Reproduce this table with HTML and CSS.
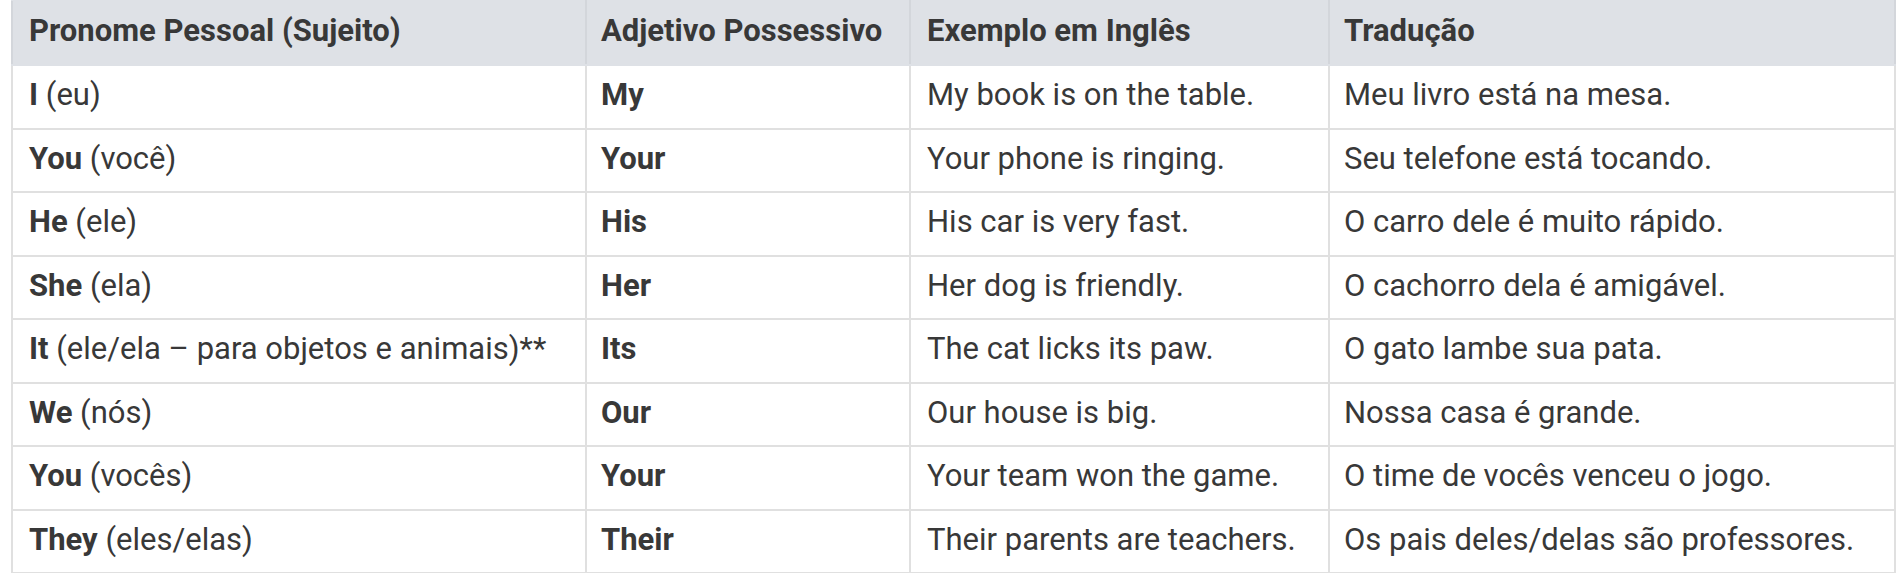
FILE: index.html
```html
<!DOCTYPE html>
<html lang="pt">
<head>
<meta charset="utf-8">
<title>Pronomes</title>
<link rel="stylesheet" href="styles.css">
</head>
<body>
<div class="wrap">
<table class="grid">
<colgroup>
<col class="c1"><col class="c2"><col class="c3"><col class="c4">
</colgroup>
<thead>
<tr><th>Pronome Pessoal (Sujeito)</th><th>Adjetivo Possessivo</th><th>Exemplo em Inglês</th><th>Tradução</th></tr>
</thead>
<tbody>
<tr><td><b>I</b> (eu)</td><td><b>My</b></td><td>My book is on the table.</td><td>Meu livro está na mesa.</td></tr>
<tr><td><b>You</b> (você)</td><td><b>Your</b></td><td>Your phone is ringing.</td><td>Seu telefone está tocando.</td></tr>
<tr><td><b>He</b> (ele)</td><td><b>His</b></td><td>His car is very fast.</td><td>O carro dele é muito rápido.</td></tr>
<tr><td><b>She</b> (ela)</td><td><b>Her</b></td><td>Her dog is friendly.</td><td>O cachorro dela é amigável.</td></tr>
<tr><td><b>It</b> (ele/ela – para objetos e animais)**</td><td><b>Its</b></td><td>The cat licks its paw.</td><td>O gato lambe sua pata.</td></tr>
<tr><td><b>We</b> (nós)</td><td><b>Our</b></td><td>Our house is big.</td><td>Nossa casa é grande.</td></tr>
<tr><td><b>You</b> (vocês)</td><td><b>Your</b></td><td>Your team won the game.</td><td>O time de vocês venceu o jogo.</td></tr>
<tr><td><b>They</b> (eles/elas)</td><td><b>Their</b></td><td>Their parents are teachers.</td><td>Os pais deles/delas são professores.</td></tr>
</tbody>
</table>
</div>
</body>
</html>
```
FILE: styles.css
```css
html, body {
  margin: 0;
  padding: 0;
  background: #ffffff;
}
.wrap {
  padding: 0 10px 0 11px;
  margin-top: -1px;
}
.grid {
  width: 1883px;
  table-layout: fixed;
  border-collapse: collapse;
  font-family: Roboto, "Liberation Sans", sans-serif;
  font-size: 31px;
  color: #383838;
}
.c1 { width: 574px; }
.c2 { width: 324px; }
.c3 { width: 419px; }
.c4 { width: 566px; }
.grid th,
.grid td {
  text-align: left;
  padding: 0 15px 4px 16px;
  border: 2px solid #e0e0e0;
  white-space: nowrap;
  vertical-align: middle;
}
.grid th:nth-child(2),
.grid td:nth-child(2),
.grid th:nth-child(4),
.grid td:nth-child(4) {
  padding-left: 14px;
}
.grid th {
  background: #dee1e6;
  font-weight: 700;
  border-color: #d3d6db;
  border-top-color: #dee1e6;
  border-bottom-color: #dee1e6;
}
.grid thead tr { height: 65px; }
.grid tbody tr { height: 63.5px; }
.grid b { font-weight: 700; }
```
